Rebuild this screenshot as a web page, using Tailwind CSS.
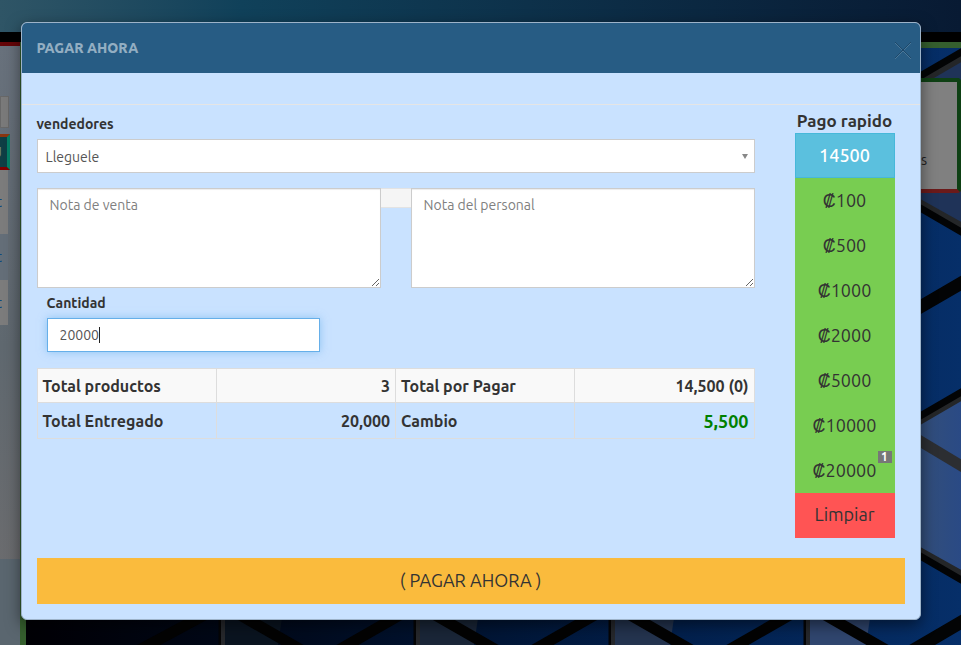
<!DOCTYPE html>
<html lang="es">
  <head>
    <meta charset="UTF-8" />
    <meta name="viewport" content="width=device-width, initial-scale=1.0" />
    <script src="https://cdn.jsdelivr.net/npm/@tailwindcss/browser@4"></script>
    <title>Pagar ahora</title>
  </head>

  <body class="relative min-h-screen overflow-x-hidden bg-black font-['Ubuntu','Open_Sans',sans-serif] text-sm text-[#333]">
    <!-- Point of sale page, dimmed behind the modal -->
    <div class="absolute inset-0 flex flex-col overflow-hidden" aria-hidden="true">
      <div class="h-8 shrink-0 bg-linear-to-r from-[#2f5566] via-[#10415a] via-25% to-[#081a33]"></div>
      <div class="h-[10px] shrink-0 bg-black"></div>
      <div class="flex min-h-0 flex-1">
        <!-- Product list -->
        <div class="flex w-5 flex-col border-t-4 border-[#650508] bg-linear-to-b from-[#68717c] via-[#5f686f] to-[#6f6d6e]">
          <div class="mt-[50px] h-8 w-[9px] border border-[#686868] bg-[#7a7a7a]"></div>
          <div class="mt-[6px] flex h-9 w-[10px] items-center overflow-hidden border-t-3 border-r-3 border-b-3 border-t-[#8a3610] border-r-[#048066] border-b-[#800000] bg-[#0e3f45] text-[#6f8a80]">
            <span class="flex w-[2px] justify-end">J</span>
          </div>
          <div class="flex h-16 w-2 items-center bg-[#7c7c7c] text-[#0f4a80]"><span class="flex w-[2px] justify-end overflow-hidden">t</span></div>
          <div class="flex h-[46px] w-2 items-center bg-[#646e78] text-[#0f4a80]"><span class="flex w-[2px] justify-end overflow-hidden">t</span></div>
          <div class="flex h-[45px] w-2 items-center bg-[#7c7c7c] text-[#0f4a80]"><span class="flex w-[2px] justify-end overflow-hidden">t</span></div>
          <div class="mt-auto h-[86px] bg-[#5a666f]"></div>
        </div>

        <!-- Catalogue on a hexagon wallpaper -->
        <div class="relative flex-1 border-t-6 border-l-6 border-[#355f2e]">
          <svg class="absolute inset-0 h-full w-full" viewBox="26 48 935 597" preserveAspectRatio="xMaxYMin slice">
            <defs>
              <linearGradient id="base" x1="0" x2="1">
                <stop offset="0" stop-color="#000005" />
                <stop offset="0.3" stop-color="#000b1f" />
                <stop offset="0.7" stop-color="#02204d" />
                <stop offset="1" stop-color="#062f69" />
              </linearGradient>
              <linearGradient id="facet" x1="0" x2="1">
                <stop offset="0" stop-color="#344f78" />
                <stop offset="1" stop-color="#2a4a85" />
              </linearGradient>
            </defs>
            <rect x="26" y="48" width="935" height="597" fill="url(#base)" />
            <path d="M915 78 961 52V232L915 205Z" fill="#1f3358" />
            <path d="M915 426 961 398V580L915 553Z" fill="url(#facet)" />
            <g stroke="#242628" stroke-width="7">
              <path d="M915 85 965 56M915 200 965 228M915 424 965 395M915 548 965 576" />
            </g>
            <path d="M915 438 965 468" stroke="#2c2e32" stroke-width="11" />
            <g stroke="#030405" stroke-width="7">
              <path d="M915 79 965 50M915 205 965 234M915 419 965 390M915 553 965 582" />
              <path d="M915 310 965 281M905 655 965 620" stroke-width="13" />
            </g>
            <g>
              <path d="M222 618H282L278 645H222Z" fill="#0a1420" />
              <path d="M417 618H478L474 645H417Z" fill="#1a2638" />
              <path d="M612 618H674L670 645H612Z" fill="#24344f" />
              <path d="M807 618H870L866 645H807Z" fill="#30466f" />
            </g>
            <g stroke="#030303" stroke-width="11">
              <path d="M235 612 310 655M430 612 505 655M625 612 700 655M820 612 895 655M330 655 405 612M525 655 600 612M720 655 795 612M130 655 210 612" />
            </g>
            <path d="M220 618V645M415 618V645M610 618V645M805 618V645" stroke="#050506" stroke-width="3" />
            <path d="M223 618V645M418 618V645M613 618V645M808 618V645" stroke="#26282c" stroke-width="4" />
          </svg>
          <div class="absolute top-[30px] right-0 flex h-[115px] w-[115px] items-center justify-end rounded border-4 border-[#0e4014] border-b-[#6b1a1a] bg-[#808080] pt-12 pr-[30px] text-[#222]">s</div>
        </div>
      </div>
    </div>

    <!-- Payment modal -->
    <div class="relative py-[22px] pr-5">
      <main class="mx-auto max-w-[900px] overflow-hidden rounded-md border border-[#9db3c9] bg-[#c9e2ff] shadow-[0_5px_15px_rgba(0,0,0,0.5)]" role="dialog" aria-labelledby="modal-title">
        <header class="flex h-[50px] items-center justify-between bg-[#275c84] pr-2 pl-[15px]">
          <h1 id="modal-title" class="text-sm font-extrabold text-[#93aec2]">PAGAR AHORA</h1>
          <button type="button" aria-label="Cerrar" class="pt-[3px] text-[#1d486a]">
            <svg class="size-[18px]" viewBox="0 0 18 18" fill="none" stroke="currentColor">
              <path d="M1 2 17 18M17 2 1 18" stroke="#4b7899" />
              <path d="M1 1 17 17M17 1 1 17" />
            </svg>
          </button>
        </header>
        <div class="h-8 border-b border-[#e5e5e5]"></div>

        <form class="px-[15px] pb-[15px]">
          <div class="flex gap-10 pr-[10px]">
            <div class="min-w-0 flex-1 pt-[9px]">
              <label for="seller" class="block h-[25px] leading-5 font-bold">vendedores</label>
              <div class="relative">
                <select id="seller" class="block h-[34px] w-full appearance-none border border-[#ccc] bg-white px-2 pt-[2px] text-[#555]">
                  <option>Lleguele</option>
                </select>
                <svg class="pointer-events-none absolute top-[15px] right-[7px] h-[5px] w-[6px]" viewBox="0 0 6 5" fill="#888"><path d="M0 0H6L3 5Z" /></svg>
              </div>

              <div class="mt-[15px] grid grid-cols-[1fr_30px_1fr]">
                <textarea aria-label="Nota de venta" placeholder="Nota de venta" class="block h-[100px] resize border border-[#ccc] bg-white px-3 py-[6px] leading-5 shadow-[inset_0_1px_1px_rgba(0,0,0,0.075)] placeholder:text-[#808080]"></textarea>
                <div class="h-5 border-y border-[#e3e3e3] bg-[#f5f5f5]"></div>
                <textarea aria-label="Nota del personal" placeholder="Nota del personal" class="block h-[100px] resize border border-[#ccc] bg-white px-3 py-[6px] leading-5 shadow-[inset_0_1px_1px_rgba(0,0,0,0.075)] placeholder:text-[#808080]"></textarea>
              </div>

              <div class="mt-[5px] px-[10px]">
                <label for="amount" class="block h-[25px] leading-5 font-bold">Cantidad</label>
                <div class="flex h-[34px] w-[273px] items-center border border-[#66afe9] bg-white px-3 shadow-[0_0_8px_rgba(102,175,233,0.6)]">
                  <input id="amount" type="text" value="20000" class="w-[39px] text-[#555] outline-none" />
                  <span class="h-4 w-px bg-[#222]"></span>
                </div>
              </div>

              <table class="mt-4 w-full table-fixed border-collapse text-base leading-5 font-bold">
                <tbody>
                  <tr class="h-[34px] bg-[#f9f9f9]">
                    <td class="border border-[#ddd] px-[5px]">Total productos</td>
                    <td class="border border-[#ddd] px-[5px] text-right">3</td>
                    <td class="border border-[#ddd] px-[5px]">Total por Pagar</td>
                    <td class="border border-[#ddd] px-[5px] text-right">14,500 (0)</td>
                  </tr>
                  <tr class="h-9">
                    <td class="border border-[#ddd] px-[5px]">Total Entregado</td>
                    <td class="border border-[#ddd] px-[5px] text-right">20,000</td>
                    <td class="border border-[#ddd] px-[5px]">Cambio</td>
                    <td class="border border-[#ddd] px-[5px] text-right text-lg leading-5 text-[#008000]">5,500</td>
                  </tr>
                </tbody>
              </table>
            </div>

            <!-- Quick cash -->
            <div class="w-[100px] shrink-0 pt-[6px] text-lg">
              <h2 class="h-[22px] text-center text-[17px] leading-5 font-bold whitespace-nowrap">Pago rapido</h2>
              <div class="flex flex-col">
                <button type="button" class="h-[45px] border border-[#46b8da] bg-[#5bc0de] pb-[2px] font-medium text-white">14500</button>
                <button type="button" class="h-[45px] bg-[#78cd51] pb-[2px]">₡100</button>
                <button type="button" class="h-[45px] bg-[#78cd51] pb-[2px]">₡500</button>
                <button type="button" class="h-[45px] bg-[#78cd51] pb-[2px]">₡1000</button>
                <button type="button" class="h-[45px] bg-[#78cd51] pb-[2px]">₡2000</button>
                <button type="button" class="h-[45px] bg-[#78cd51] pb-[2px]">₡5000</button>
                <button type="button" class="h-[45px] bg-[#78cd51] pb-[2px]">₡10000</button>
                <button type="button" class="relative h-[45px] bg-[#78cd51] pb-[2px]">
                  ₡20000
                  <span class="absolute top-[3px] right-[3px] flex h-3 w-[14px] items-center justify-center bg-[#777] text-xs font-bold text-white">1</span>
                </button>
                <button type="button" class="-mt-px h-[46px] bg-[#ff5454] pb-[2px]">Limpiar</button>
              </div>
            </div>
          </div>

          <button type="submit" class="mt-5 block h-[46px] w-full bg-[#fabb3d] pb-[2px] text-lg">( PAGAR AHORA )</button>
        </form>
      </main>
    </div>
  </body>
</html>
